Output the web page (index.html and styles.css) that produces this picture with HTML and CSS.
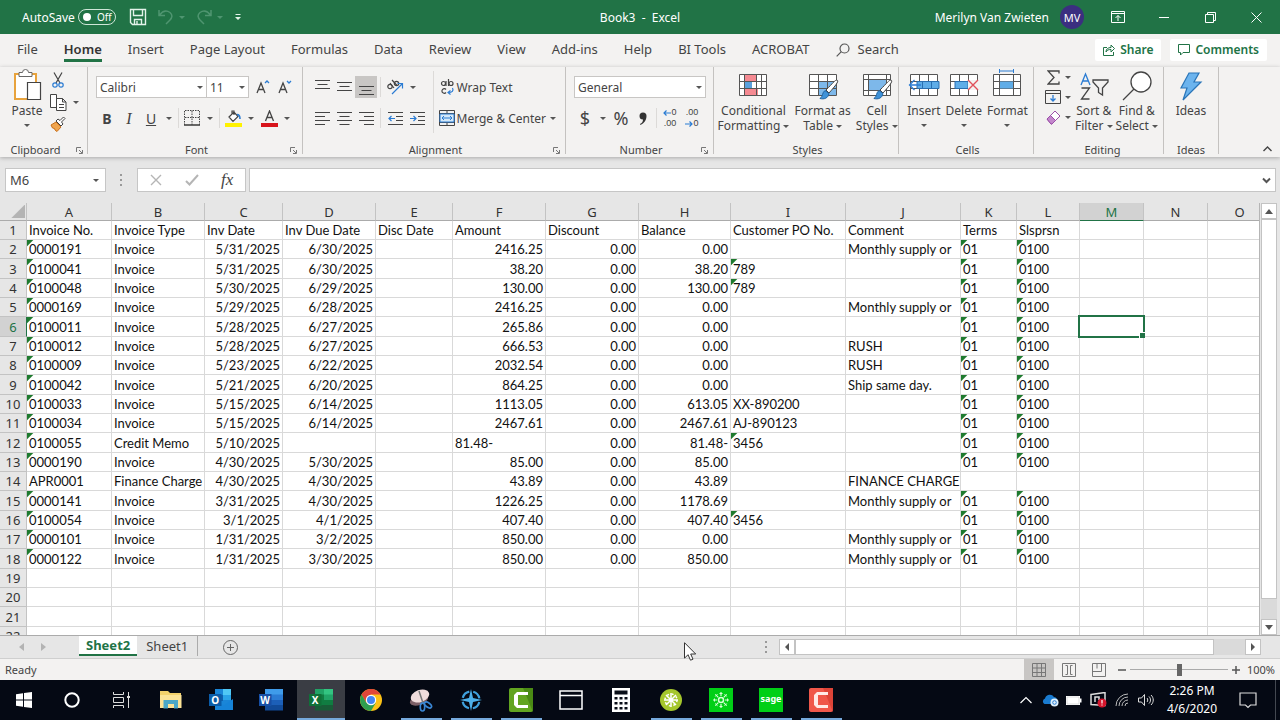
FILE: index.html
```html
<!DOCTYPE html>
<html lang="en">
<head>
<meta charset="utf-8">
<title>Book3 - Excel</title>
<link rel="stylesheet" href="styles.css">
</head>
<body>
<header class="titlebar">
  <div class="quick">
    <label class="autosave" for="autosave">AutoSave</label>
    <span class="toggle"><input type="checkbox" id="autosave"><span>Off</span></span>
    <button class="qbtn" aria-label="Save"><svg width="18" height="18" viewBox="0 0 18 18" fill="none" stroke="#e4f3ea" stroke-width="1.4"><path d="M1.5 1.5h15v15h-13l-2-2zM4.500 1.500v6h9v-6M5.500 16.500v-5h7v5M8 13v3"/></svg></button>
    <button class="qbtn dim" aria-label="Undo"><svg width="16" height="16" viewBox="0 0 16 16" fill="none" stroke="#4f9570" stroke-width="1.500"><path d="M1 1v5.500h6M1.500 6C5 1.500 9 1.500 12 3.500c3 2.500 2 5.500 0 7.500l-4 4"/></svg><i class="caret"></i></button>
    <button class="qbtn dim" aria-label="Redo"><svg width="16" height="16" viewBox="0 0 16 16" fill="none" stroke="#4f9570" stroke-width="1.500"><path d="M15 1v5.500H9M14.500 6C11 1.500 7 1.500 4 3.500c-3 2.500-2 5.500 0 7.500l4 4"/></svg><i class="caret"></i></button>
    <button class="qbtn" aria-label="Customize"><svg width="8" height="8" viewBox="0 0 8 8" fill="#e4f3ea"><path d="M1.500 1h5v1h-5zM1 4h6L4 7z"/></svg></button>
  </div>
  <h1 class="doc">Book3&nbsp; -&nbsp; Excel</h1>
  <div class="account">
    <span>Merilyn Van Zwieten</span>
    <span class="avatar">MV</span>
    <div class="winbtns">
      <button aria-label="Ribbon options"><svg width="14" height="12" viewBox="0 0 14 12" fill="none" stroke="#fff"><path d="M.5.5h13v11H.5zM.5 2.500h13M7 10V4.500M4.500 7L7 4.500 9.500 7"/></svg></button>
      <button aria-label="Minimize"><svg width="10" height="10" viewBox="0 0 10 10" stroke="#fff"><path d="M0 5.500h10"/></svg></button>
      <button aria-label="Restore"><svg width="11" height="11" viewBox="0 0 11 11" fill="none" stroke="#fff"><path d="M.5 2.500h8v8h-8zM2.500 2.500v-2h8v8h-2"/></svg></button>
      <button aria-label="Close"><svg width="11" height="11" viewBox="0 0 11 11" stroke="#fff"><path d="M.5.5l10 10M10.500.5l-10 10"/></svg></button>
    </div>
  </div>
</header>

<nav class="tabs">
  <button>File</button><button class="on">Home</button><button>Insert</button><button>Page Layout</button><button>Formulas</button><button>Data</button><button>Review</button><button>View</button><button>Add-ins</button><button>Help</button><button>BI Tools</button><button>ACROBAT</button>
  <button class="search"><svg width="14" height="14" viewBox="0 0 14 14" fill="none" stroke="#555" stroke-width="1.200"><circle cx="8.500" cy="5.500" r="4.500"/><path d="M5.300 8.700L.7 13.300"/></svg>Search</button>
  <div class="share">
    <button><svg width="12" height="13" viewBox="0 0 12 13" fill="none" stroke="#217346"><path d="M4 4.500H.5v8h10V9M3 9c0-3 2-4.500 5-4.500V2l3.500 3.500L8 9V6.500C5.500 6.500 4 7 3 9z"/></svg>Share</button>
    <button><svg width="12" height="12" viewBox="0 0 12 12" fill="none" stroke="#217346"><path d="M.5.5h11v8H5L2.500 11V8.500h-2z"/></svg>Comments</button>
  </div>
</nav>

<section class="ribbon">
  <div class="group g-clip">
    <div class="body">
      <button class="big paste"><svg width="30" height="32" viewBox="0 0 30 32" fill="none"><path d="M3 5h21v25H3z" fill="#fff" stroke="#e8a33d" stroke-width="2"/><path d="M7 3.500h3.500a3 3 0 0 1 6 0H20v4H7z" fill="#fff" stroke="#666"/><path d="M15.500 13.500h13v17h-13z" fill="#fff" stroke="#444" stroke-width="1.200"/></svg><span>Paste</span><i class="caret"></i></button>
      <div class="stack">
        <button class="ib" aria-label="Cut"><svg width="12" height="16" viewBox="0 0 12 16" fill="none"><path d="M2 .5l6 10.500M10 .5L4 11" stroke="#444" stroke-width="1.200"/><circle cx="3" cy="13" r="2.200" stroke="#2b7cd3" stroke-width="1.200"/><circle cx="9" cy="13" r="2.200" stroke="#2b7cd3" stroke-width="1.200"/></svg></button>
        <div class="pair"><button class="ib" aria-label="Copy"><svg width="17" height="17" viewBox="0 0 17 17" fill="#fff" stroke="#444"><path d="M.5.5h6v13h-6z"/><path d="M6.500 4.500h6l3.500 3.500v8.500H6.500zM12.500 4.500V8H16M9 10.500h5M9 13.500h5"/></svg></button><button class="dd" aria-label="Copy options"><i class="caret"></i></button></div>
        <button class="ib" aria-label="Format painter"><svg width="16" height="16" viewBox="0 0 16 16"><path d="M1 9l5-3 5 5-4 4.500L5 14l-.5-1.500L2.500 12z" fill="#f0a54e" stroke="#c9701a"/><path d="M6 5l2-2 2 1.500L13.500 1 15 2.500 11.500 6 13 8l-2 2z" fill="#fff" stroke="#444"/></svg></button>
      </div>
    </div>
    <div class="cap">Clipboard<button class="launch" aria-label="Clipboard settings"><svg width="7" height="7" viewBox="0 0 7 7" fill="none" stroke="#777"><path d="M.5 5V.5H5M3 3l3 3M6.500 3v3.500H3"/></svg></button></div>
  </div>

  <div class="group g-font">
    <div class="body rows">
      <div class="row">
        <span class="sel s-font"><select aria-label="Font"><option>Calibri</option></select></span>
        <span class="sel s-size"><select aria-label="Font size"><option>11</option></select></span>
        <div class="grow">
        <button class="ib" aria-label="Grow font"><svg width="14" height="16" viewBox="0 0 14 16" fill="none" stroke="#444" stroke-width="1.300"><path d="M1 14L5 4l4 10M2.500 10.500h5"/><path d="M9 4l2-2 2 2" stroke="#2b7cd3"/></svg></button>
        <button class="ib" aria-label="Shrink font"><svg width="14" height="16" viewBox="0 0 14 16" fill="none" stroke="#444" stroke-width="1.300"><path d="M1 14L5 4l4 10M2.500 10.500h5"/><path d="M9 2l2 2 2-2" stroke="#2b7cd3"/></svg></button>
        </div>
      </div>
      <div class="row">
        <button class="ib"><b>B</b></button><button class="ib ital">I</button><button class="ib"><u>U</u></button><button class="dd" aria-label="Underline options"><i class="caret"></i></button><i class="sep"></i>
        <button class="ib" aria-label="Borders"><svg width="16" height="16" viewBox="0 0 16 16" fill="none" stroke="#444"><path d="M.5 1v14M15.500 1v14M8 1v14M1 .5h14M1 7.500h14" stroke-dasharray="1.500 1"/><path d="M0 15h16" stroke-width="1.600"/></svg></button><button class="dd" aria-label="Border options"><i class="caret"></i></button><i class="sep"></i>
        <button class="ib" aria-label="Fill color"><svg width="17" height="17" viewBox="0 0 17 17" fill="none"><path d="M4 7l5-5 4 4.500-5 5zM7 4V1h2v4" stroke="#444" stroke-width="1.200" fill="#fff"/><path d="M12 4.500c2.500 0 3 2 3 4.500" stroke="#2b7cd3" stroke-width="1.600"/><path d="M0 13h17v4H0z" fill="#fff200"/></svg></button><button class="dd" aria-label="Fill options"><i class="caret"></i></button>
        <button class="ib" aria-label="Font color"><svg width="17" height="17" viewBox="0 0 17 17" fill="none"><path d="M4.500 11l4-10 4 10M6 7.500h5" stroke="#444" stroke-width="1.300"/><path d="M0 13h17v4H0z" fill="#d8141c"/></svg></button><button class="dd" aria-label="Font color options"><i class="caret"></i></button>
      </div>
    </div>
    <div class="cap">Font<button class="launch" aria-label="Font settings"><svg width="7" height="7" viewBox="0 0 7 7" fill="none" stroke="#777"><path d="M.5 5V.5H5M3 3l3 3M6.500 3v3.500H3"/></svg></button></div>
  </div>

  <div class="group g-align">
    <div class="body">
      <div class="rows">
        <div class="row">
          <button class="ib" aria-label="Top align"><svg width="15" height="16" viewBox="0 0 15 16" stroke="#444" stroke-width="1.200"><path d="M0 1.500h15M2.500 5.500h10M0 9.500h15"/></svg></button><button class="ib" aria-label="Middle align"><svg width="15" height="16" viewBox="0 0 15 16" stroke="#444" stroke-width="1.200"><path d="M0 3.500h15M2.500 7.500h10M0 11.500h15"/></svg></button><button class="ib pressed" aria-label="Bottom align"><svg width="15" height="16" viewBox="0 0 15 16" stroke="#444" stroke-width="1.200"><path d="M0 7.500h15M2.500 11.500h10M0 15.500h15"/></svg></button><i class="sep"></i>
          <button class="ib" aria-label="Orientation"><svg width="18" height="18" viewBox="0 0 18 18" fill="none" stroke="#444" stroke-width="1.200"><circle cx="4" cy="8.500" r="2.200"/><path d="M4 5l4 5M6 2l5 5.500"/><circle cx="10.500" cy="5.500" r="2.200"/><path d="M6 16L16 6M11.500 5.500H16.500V10.500" stroke="#2b7cd3"/></svg></button><button class="dd" aria-label="Orientation options"><i class="caret"></i></button>
        </div>
        <div class="row">
          <button class="ib" aria-label="Align left"><svg width="15" height="15" viewBox="0 0 15 15" stroke="#444" stroke-width="1.200"><path d="M0 1.500h15M0 5.500h10M0 9.500h15M0 13.500h10"/></svg></button><button class="ib" aria-label="Center"><svg width="15" height="15" viewBox="0 0 15 15" stroke="#444" stroke-width="1.200"><path d="M0 1.500h15M2.500 5.500h10M0 9.500h15M2.500 13.500h10"/></svg></button><button class="ib" aria-label="Align right"><svg width="15" height="15" viewBox="0 0 15 15" stroke="#444" stroke-width="1.200"><path d="M0 1.500h15M5 5.500h10M0 9.500h15M5 13.500h10"/></svg></button><i class="sep"></i>
          <button class="ib" aria-label="Decrease indent"><svg width="15" height="15" viewBox="0 0 15 15" fill="none" stroke="#444" stroke-width="1.200"><path d="M0 1.500h15M8 5.500h7M8 9.500h7M0 13.500h15"/><path d="M7 7.500H1M3.500 5L1 7.500 3.500 10" stroke="#2b7cd3"/></svg></button><button class="ib" aria-label="Increase indent"><svg width="15" height="15" viewBox="0 0 15 15" fill="none" stroke="#444" stroke-width="1.200"><path d="M0 1.500h15M8 5.500h7M8 9.500h7M0 13.500h15"/><path d="M0 7.500h6M3.500 5L6 7.500 3.500 10" stroke="#2b7cd3"/></svg></button>
        </div>
      </div>
      <i class="tall"></i>
      <div class="rows">
        <div class="row"><button class="wide"><svg width="16" height="18" viewBox="0 0 16 18" fill="none" stroke="#444" stroke-width="1.200"><circle cx="4.500" cy="5.500" r="2"/><path d="M7 3v5M9.500 1v7M7 14.500a2.300 2.300 0 1 1 0-3"/><circle cx="12" cy="5.500" r="2"/><path d="M13.500 10c1.500 3-.5 4.500-4 4.500M11.500 12.500l-2.500 2 2.500 2" stroke="#2b7cd3"/></svg>Wrap Text</button></div>
        <div class="row"><button class="wide"><svg width="16" height="16" viewBox="0 0 16 16" fill="none" stroke="#444"><path d="M.5.5h15v15H.5zM.5 3.500h15M.5 12.500h15M8 .5v3M8 12.500v3"/><path d="M1 4h14v8H1z" fill="#d4e8f8" stroke="#2b7cd3"/><path d="M3 8h10M5 6L3 8l2 2M11 6l2 2-2 2" stroke="#2b7cd3"/></svg>Merge &amp; Center</button><button class="dd" aria-label="Merge options"><i class="caret"></i></button></div>
      </div>
    </div>
    <div class="cap">Alignment<button class="launch" aria-label="Alignment settings"><svg width="7" height="7" viewBox="0 0 7 7" fill="none" stroke="#777"><path d="M.5 5V.5H5M3 3l3 3M6.500 3v3.500H3"/></svg></button></div>
  </div>

  <div class="group g-num">
    <div class="body rows">
      <div class="row"><span class="sel s-num"><select aria-label="Number format"><option>General</option></select></span></div>
      <div class="row">
        <button class="ib sym">$</button><button class="dd" aria-label="Currency options"><i class="caret"></i></button><button class="ib sym">%</button><button class="ib" aria-label="Comma style"><svg width="8" height="13" viewBox="0 0 8 13" fill="#333"><path d="M1 12c2-1 3-2.500 3-4.500A3.500 3.500 0 1 1 7.500 4C7.500 8 5 11.500 1.500 13z"/></svg></button><i class="sep"></i>
        <button class="ib dec" aria-label="Increase decimal"><span><svg width="8" height="8" viewBox="0 0 8 8" fill="none" stroke="#2b7cd3" stroke-width="1.200"><path d="M8 4H1M3.500 1.500L1 4l2.500 2.500"/></svg>0</span><span>.00</span></button>
        <button class="ib dec" aria-label="Decrease decimal"><span>.00</span><span><svg width="8" height="8" viewBox="0 0 8 8" fill="none" stroke="#2b7cd3" stroke-width="1.200"><path d="M0 4h7M4.500 1.500L7 4 4.500 6.500"/></svg>0</span></button>
      </div>
    </div>
    <div class="cap">Number<button class="launch" aria-label="Number settings"><svg width="7" height="7" viewBox="0 0 7 7" fill="none" stroke="#777"><path d="M.5 5V.5H5M3 3l3 3M6.500 3v3.500H3"/></svg></button></div>
  </div>

  <div class="group g-styles">
    <div class="body">
      <button class="big"><svg width="30" height="32" viewBox="0 0 30 32" fill="none"><path d="M1.500 5.500h27v21h-27z" fill="#fff"/><path d="M6 5h12v7H6zM6 19h14v7H6z" fill="#f58a92"/><path d="M6 12h8v7H6z" fill="#5ba0dc"/><path d="M1.500 5.500h27v21h-27zM1.500 12.500h27M1.500 19.500h27M6.500 5v21M18.500 5v21M23.500 5v21" stroke="#555"/></svg><span>Conditional<br>Formatting <i class="caret"></i></span></button>
      <button class="big"><svg width="32" height="32" viewBox="0 0 32 32" fill="none"><path d="M2.500 5.500h27v21h-27z" fill="#fff"/><path d="M11 12h18v14H11z" fill="#7db8ea"/><path d="M2.500 5.500h27v21h-27zM2.500 12.500h27M2.500 19.500h27M11.500 5v21M20.500 5v21" stroke="#555"/><path d="M30 11c2 1 0 4-8 13l-3-3c7-7 9-10 11-10z" fill="#fff" stroke="#444"/><path d="M18 21.500l4 3c-1 5-5 6-9 5 3-2 2-6 5-8z" fill="#3f92d8" stroke="#1f62a0"/></svg><span>Format as<br>Table <i class="caret"></i></span></button>
      <button class="big"><svg width="32" height="32" viewBox="0 0 32 32" fill="none"><path d="M2.500 5.500h27v21h-27z" fill="#fff"/><path d="M7 10h18v12H7z" fill="#7db8ea"/><path d="M2.500 5.500h27v21h-27zM2.500 10.500h27M2.500 21.500h27M7.500 5v21M25.500 5v21" stroke="#555"/><path d="M30 11c2 1 0 4-8 13l-3-3c7-7 9-10 11-10z" fill="#fff" stroke="#444"/><path d="M18 21.500l4 3c-1 5-5 6-9 5 3-2 2-6 5-8z" fill="#3f92d8" stroke="#1f62a0"/></svg><span>Cell<br>Styles <i class="caret"></i></span></button>
    </div>
    <div class="cap">Styles</div>
  </div>

  <div class="group g-cells">
    <div class="body">
      <button class="big"><svg width="32" height="32" viewBox="0 0 32 32" fill="none"><path d="M2.500 5.500h27v21h-27zM2.500 12.500h27M2.500 19.500h27M11.500 5v21M20.500 5v21" fill="#fff" stroke="#555"/><path d="M9 12.500h22v7H9z" fill="#5fade8" stroke="#2a6fb0"/><path d="M14.500 13v6M23.500 13v6" stroke="#2a6fb0"/><path d="M13 16H2M6.500 11L1.500 16l5 5" stroke="#2b7cd3" stroke-width="1.300"/></svg><span>Insert</span><i class="caret"></i></button>
      <button class="big"><svg width="32" height="32" viewBox="0 0 32 32" fill="none"><path d="M2.500 5.500h27v21h-27zM2.500 12.500h27M2.500 19.500h27M11.500 5v21M20.500 5v21" fill="#fff" stroke="#555"/><path d="M7 12.500h13v7H7z" fill="#5fade8" stroke="#2a6fb0"/><path d="M20 11h11v10H20z" fill="#f3f2f1"/><path d="M20 11l10 10M30 11L20 21" stroke="#e0505a" stroke-width="1.400"/></svg><span>Delete</span><i class="caret"></i></button>
      <button class="big"><svg width="32" height="32" viewBox="0 0 32 32" fill="none"><path d="M2.500 5.500h27v21h-27zM2.500 12.500h27M2.500 19.500h27M8.500 5v21M22.500 5v21" fill="#fff" stroke="#555"/><path d="M9 12.500h13v7H9z" fill="#5fade8"/><path d="M8.500 2h14M8.500 0v4M22.500 0v4" stroke="#2b7cd3"/></svg><span>Format</span><i class="caret"></i></button>
    </div>
    <div class="cap">Cells</div>
  </div>

  <div class="group g-edit">
    <div class="body">
      <div class="stack tight">
        <div class="pair"><button class="ib" aria-label="AutoSum"><svg width="13" height="15" viewBox="0 0 13 15" fill="none" stroke="#444" stroke-width="1.300"><path d="M12 3.500V1H1l6 6.500L1 14h11v-2.500"/></svg></button><button class="dd" aria-label="AutoSum options"><i class="caret"></i></button></div>
        <div class="pair"><button class="ib" aria-label="Fill"><svg width="16" height="14" viewBox="0 0 16 14" fill="none" stroke="#444"><path d="M.5.5h15v13H.5zM.5 3.500h15"/><path d="M8 5v6M5.500 8.500L8 11l2.500-2.500" stroke="#2b7cd3" stroke-width="1.300"/></svg></button><button class="dd" aria-label="Fill options"><i class="caret"></i></button></div>
        <div class="pair"><button class="ib" aria-label="Clear"><svg width="15" height="15" viewBox="0 0 15 15"><path d="M1 9l8-8 5 5-8 8H5z" fill="#fff" stroke="#9b4fa8"/><path d="M1 9l3.500-3.500 5 5L6 14H5z" fill="#c387cc" stroke="#9b4fa8"/></svg></button><button class="dd" aria-label="Clear options"><i class="caret"></i></button></div>
      </div>
      <button class="big"><svg width="30" height="32" viewBox="0 0 30 32" fill="none" stroke-width="1.300"><path d="M2 16L6.500 5 11 16M3.500 12h6" stroke="#2b7cd3"/><path d="M2.500 19h8l-8 11h8M14 11h15v2l-5.500 6v7l-4-2.500V19L14 13z" stroke="#444"/></svg><span>Sort &amp;<br>Filter <i class="caret"></i></span></button>
      <button class="big"><svg width="30" height="32" viewBox="0 0 30 32" fill="none" stroke="#444" stroke-width="1.300"><circle cx="19" cy="13" r="10" fill="#fff"/><path d="M12 20L1 31"/></svg><span>Find &amp;<br>Select <i class="caret"></i></span></button>
    </div>
    <div class="cap">Editing</div>
  </div>

  <div class="group g-ideas">
    <div class="body"><button class="big"><svg width="24" height="32" viewBox="0 0 24 32"><path d="M10 4h10l-5 9h7L4 31l4-12H2z" fill="#6cb4ee" stroke="#2a75b8" stroke-width="1.200"/></svg><span>Ideas</span></button></div>
    <div class="cap">Ideas</div>
  </div>
  <button class="collapse" aria-label="Collapse ribbon"><svg width="9" height="6" viewBox="0 0 9 6" fill="none" stroke="#444" stroke-width="1.400"><path d="M.5 5l4-4 4 4"/></svg></button>
</section>

<section class="fbar">
  <div class="namebox"><input aria-label="Name box" value="M6"><i class="caret"></i></div>
  <svg class="dots" width="3" height="14" viewBox="0 0 3 14" fill="#999"><path d="M0 1h2v2H0zM0 6h2v2H0zM0 11h2v2H0z"/></svg>
  <div class="fx">
    <button aria-label="Cancel"><svg width="12" height="12" viewBox="0 0 12 12" stroke="#b5b5b5" stroke-width="1.400"><path d="M1 1l10 10M11 1L1 11"/></svg></button>
    <button aria-label="Enter"><svg width="14" height="12" viewBox="0 0 14 12" fill="none" stroke="#b5b5b5" stroke-width="2"><path d="M1 7l3.500 3.500L13 1"/></svg></button>
    <button class="fn">fx</button>
  </div>
  <div class="formula"><input aria-label="Formula"><svg width="9" height="7" viewBox="0 0 9 7" fill="none" stroke="#555" stroke-width="2"><path d="M1 1.500l3.500 3.500L8 1.500"/></svg></div>
</section>

<main class="work">
  <div class="gridwrap">
    <table>
      <colgroup><col class="c0"><col class="c85"><col class="c93"><col class="c78"><col class="c93"><col class="c77"><col class="c93"><col class="c93"><col class="c92"><col class="c115"><col class="c115"><col class="c56"><col class="c63"><col class="c64"><col class="c64"><col class="c64"></colgroup>
      <thead><tr><th class="corner"></th><th>A</th><th>B</th><th>C</th><th>D</th><th>E</th><th>F</th><th>G</th><th>H</th><th>I</th><th>J</th><th>K</th><th>L</th><th class="cur">M</th><th>N</th><th>O</th></tr></thead>
      <tbody>
      <tr class="names"><th>1<td>Invoice No.<td>Invoice Type<td>Inv Date<td>Inv Due Date<td>Disc Date<td>Amount<td>Discount<td>Balance<td>Customer PO No.<td>Comment<td>Terms<td>Slsprsn<td><td><td></tr>
      <tr><th>2<td class="e">0000191<td>Invoice<td>5/31/2025<td>6/30/2025<td><td>2416.25<td>0.00<td>0.00<td><td>Monthly supply or<td class="e">01<td class="e">0100<td><td><td></tr>
      <tr><th>3<td class="e">0100041<td>Invoice<td>5/31/2025<td>6/30/2025<td><td>38.20<td>0.00<td>38.20<td class="e">789<td><td class="e">01<td class="e">0100<td><td><td></tr>
      <tr><th>4<td class="e">0100048<td>Invoice<td>5/30/2025<td>6/29/2025<td><td>130.00<td>0.00<td>130.00<td class="e">789<td><td class="e">01<td class="e">0100<td><td><td></tr>
      <tr><th>5<td class="e">0000169<td>Invoice<td>5/29/2025<td>6/28/2025<td><td>2416.25<td>0.00<td>0.00<td><td>Monthly supply or<td class="e">01<td class="e">0100<td><td><td></tr>
      <tr><th class="cur">6<td class="e">0100011<td>Invoice<td>5/28/2025<td>6/27/2025<td><td>265.86<td>0.00<td>0.00<td><td><td class="e">01<td class="e">0100<td class="active"><td><td></tr>
      <tr><th>7<td class="e">0100012<td>Invoice<td>5/28/2025<td>6/27/2025<td><td>666.53<td>0.00<td>0.00<td><td>RUSH<td class="e">01<td class="e">0100<td><td><td></tr>
      <tr><th>8<td class="e">0100009<td>Invoice<td>5/23/2025<td>6/22/2025<td><td>2032.54<td>0.00<td>0.00<td><td>RUSH<td class="e">01<td class="e">0100<td><td><td></tr>
      <tr><th>9<td class="e">0100042<td>Invoice<td>5/21/2025<td>6/20/2025<td><td>864.25<td>0.00<td>0.00<td><td>Ship same day.<td class="e">01<td class="e">0100<td><td><td></tr>
      <tr><th>10<td class="e">0100033<td>Invoice<td>5/15/2025<td>6/14/2025<td><td>1113.05<td>0.00<td>613.05<td>XX-890200<td><td class="e">01<td class="e">0100<td><td><td></tr>
      <tr><th>11<td class="e">0100034<td>Invoice<td>5/15/2025<td>6/14/2025<td><td>2467.61<td>0.00<td>2467.61<td>AJ-890123<td><td class="e">01<td class="e">0100<td><td><td></tr>
      <tr><th>12<td class="e">0100055<td>Credit Memo<td>5/10/2025<td><td><td class="txt">81.48-<td>0.00<td>81.48-<td class="e">3456<td><td class="e">01<td class="e">0100<td><td><td></tr>
      <tr><th>13<td class="e">0000190<td>Invoice<td>4/30/2025<td>5/30/2025<td><td>85.00<td>0.00<td>85.00<td><td><td class="e">01<td class="e">0100<td><td><td></tr>
      <tr><th>14<td>APR0001<td>Finance Charge<td>4/30/2025<td>4/30/2025<td><td>43.89<td>0.00<td>43.89<td><td>FINANCE CHARGE<td><td><td><td><td></tr>
      <tr><th>15<td class="e">0000141<td>Invoice<td>3/31/2025<td>4/30/2025<td><td>1226.25<td>0.00<td>1178.69<td><td>Monthly supply or<td class="e">01<td class="e">0100<td><td><td></tr>
      <tr><th>16<td class="e">0100054<td>Invoice<td>3/1/2025<td>4/1/2025<td><td>407.40<td>0.00<td>407.40<td class="e">3456<td><td class="e">01<td class="e">0100<td><td><td></tr>
      <tr><th>17<td class="e">0000101<td>Invoice<td>1/31/2025<td>3/2/2025<td><td>850.00<td>0.00<td>0.00<td><td>Monthly supply or<td class="e">01<td class="e">0100<td><td><td></tr>
      <tr><th>18<td class="e">0000122<td>Invoice<td>1/31/2025<td>3/30/2025<td><td>850.00<td>0.00<td>850.00<td><td>Monthly supply or<td class="e">01<td class="e">0100<td><td><td></tr>
      <tr><th>19<td><td><td><td><td><td><td><td><td><td><td><td><td><td><td></tr>
      <tr><th>20<td><td><td><td><td><td><td><td><td><td><td><td><td><td><td></tr>
      <tr><th>21<td><td><td><td><td><td><td><td><td><td><td><td><td><td><td></tr>
      <tr><th>22<td><td><td><td><td><td><td><td><td><td><td><td><td><td><td></tr>
      </tbody>
    </table>
  </div>
  <div class="vscroll">
    <button aria-label="Scroll up"><svg width="8" height="5" viewBox="0 0 8 5" fill="#555"><path d="M0 5h8L4 0z"/></svg></button>
    <div class="vthumb"></div><div class="vtrack"></div>
    <button aria-label="Scroll down"><svg width="8" height="5" viewBox="0 0 8 5" fill="#555"><path d="M0 0h8L4 5z"/></svg></button>
  </div>
</main>

<section class="sheets">
  <div class="snav"><button aria-label="Previous sheet"><svg width="5" height="8" viewBox="0 0 5 8" fill="#b3b3b3"><path d="M5 0v8L0 4z"/></svg></button><button aria-label="Next sheet"><svg width="5" height="8" viewBox="0 0 5 8" fill="#b3b3b3"><path d="M0 0v8l5-4z"/></svg></button></div>
  <button class="tab on">Sheet2</button><button class="tab">Sheet1</button>
  <button class="add" aria-label="New sheet"><svg width="15" height="15" viewBox="0 0 15 15" fill="none" stroke="#666"><circle cx="7.500" cy="7.500" r="7"/><path d="M7.500 4v7M4 7.500h7"/></svg></button>
  <div class="hscroll">
    <svg class="dots" width="3" height="14" viewBox="0 0 3 14" fill="#999"><path d="M0 1h2v2H0zM0 6h2v2H0zM0 11h2v2H0z"/></svg>
    <button aria-label="Scroll left"><svg width="4" height="8" viewBox="0 0 4 8" fill="#555"><path d="M4 0v8L0 4z"/></svg></button>
    <div class="hthumb"></div><div class="htrack"></div>
    <button aria-label="Scroll right"><svg width="4" height="8" viewBox="0 0 4 8" fill="#555"><path d="M0 0v8l4-4z"/></svg></button>
  </div>
</section>

<footer class="status">
  <span>Ready</span>
  <div class="views">
    <button class="pressed" aria-label="Normal"><svg width="14" height="14" viewBox="0 0 14 14" fill="none" stroke="#777"><path d="M.5.5h13v13H.5zM.5 5h13M.5 9.500h13M5 .5v13M9.500.5v13"/></svg></button>
    <button aria-label="Page layout"><svg width="14" height="14" viewBox="0 0 14 14" fill="none" stroke="#777"><path d="M.5.5h13v13H.5zM3.500 2.500h2v9h-2M10.500 2.500h-2v9h2M5.500 5v4M8.500 5v4"/></svg></button>
    <button aria-label="Page break preview"><svg width="14" height="14" viewBox="0 0 14 14" fill="none" stroke="#777"><path d="M.5.5h13v13H.5zM.5 8.500h9v-8M5 .5v5"/></svg></button>
  </div>
  <button class="zm" aria-label="Zoom out"><svg width="8" height="8" viewBox="0 0 8 8" stroke="#555" stroke-width="1.500"><path d="M0 4h8"/></svg></button>
  <input type="range" aria-label="Zoom" min="0" max="100" value="50">
  <button class="zm" aria-label="Zoom in"><svg width="8" height="8" viewBox="0 0 8 8" stroke="#555" stroke-width="1.500"><path d="M0 4h8M4 0v8"/></svg></button>
  <span class="pct">100%</span>
</footer>

<footer class="taskbar">
  <button class="sys" aria-label="Start"><svg width="16" height="16" viewBox="0 0 16 16" fill="#fff"><path d="M0 2.200l7-1V7.500H0zM8 1l8-1v7.500H8zM0 8.500h7v6.300l-7-1zM8 8.500h8V16l-8-1z"/></svg></button>
  <button class="sys" aria-label="Search"><svg width="16" height="16" viewBox="0 0 16 16" fill="none" stroke="#fff" stroke-width="2"><circle cx="8" cy="8" r="6.700"/></svg></button>
  <button class="sys" aria-label="Task view"><svg width="17" height="16" viewBox="0 0 17 16" fill="none" stroke="#ddd"><path d="M.5 0v2.500h10V0M.5 5.500h10v5H.5zM.5 16v-2.500h10V16M15.500 0v16"/><path d="M14 5h3" stroke-width="2"/></svg></button>
  <button class="app" aria-label="File Explorer"><svg width="22" height="20" viewBox="0 0 22 20"><path d="M0 1h8l2 2h11v14H0z" fill="#f2d16b"/><path d="M0 5h21.500v13H0z" fill="#fbe396"/><path d="M3.500 10h14.500v8.500h-4V14h-6v4.500H3.500z" fill="#4aa8c8"/></svg></button>
  <button class="app" aria-label="Outlook"><svg width="24" height="22" viewBox="0 0 24 22"><path d="M6 0h16v16H6z" fill="#1a86d8"/><path d="M14 0h8v6h-8z" fill="#50c8f5"/><path d="M6 6h8v6H6z" fill="#0f62b0"/><path d="M14 6h8v5h-8z" fill="#2aa4e8"/><path d="M6 13l9 3 9-6v11H6z" fill="#1683d8"/><path d="M0 5h12.500v12H0z" fill="#0b5ca8"/><text x="6.200" y="14.500" class="glyph">O</text></svg></button>
  <button class="app" aria-label="Word"><svg width="24" height="22" viewBox="0 0 24 22"><path d="M6 0h18v6H6z" fill="#3f9bea"/><path d="M6 5.500h18V11H6z" fill="#2b7bd4"/><path d="M6 11h18v5.500H6z" fill="#1c5fb8"/><path d="M6 16h18v5.500H6z" fill="#114a98"/><path d="M0 5h12.500v12H0z" fill="#174fa5"/><text x="6.200" y="14.500" class="glyph">W</text></svg></button>
  <button class="app run front" aria-label="Excel"><svg width="24" height="22" viewBox="0 0 24 22"><path d="M6 0h9v6H6z" fill="#21a366"/><path d="M15 0h9v6h-9z" fill="#33c481"/><path d="M6 5.500h9V16H6z" fill="#107c41"/><path d="M15 5.500h9V11h-9z" fill="#21a366"/><path d="M15 11h9v5.500h-9z" fill="#107c41"/><path d="M6 16h18v5.500H6z" fill="#185c37"/><path d="M0 5h12.500v12H0z" fill="#0f7038"/><text x="6.200" y="14.500" class="glyph">X</text></svg></button>
  <button class="app" aria-label="Chrome"><svg width="22" height="22" viewBox="0 0 22 22"><circle cx="11" cy="11" r="11" fill="#fbc116"/><path d="M1.500 5.500A11 11 0 0 1 20.500 5.500H11l-4.800 8.200z" fill="#e0463a"/><path d="M1.500 5.500A11 11 0 0 0 11 22l4.800-8.200H6.300z" fill="#2e9e4f"/><circle cx="11" cy="11" r="5.200" fill="#fff"/><circle cx="11" cy="11" r="4" fill="#4285f4"/></svg></button>
  <button class="app run" aria-label="Snipping Tool"><svg width="24" height="23" viewBox="0 0 24 23" fill="none"><ellipse cx="10" cy="11" rx="9.500" ry="5" fill="#7d5f66" transform="rotate(-20 10 11)"/><ellipse cx="11" cy="7" rx="9.500" ry="6" fill="#f0dcdc" transform="rotate(-20 11 7)"/><path d="M10 2l4 12M12 15l4-2" stroke="#777" stroke-width="1.500"/><ellipse cx="13.500" cy="18" rx="2.200" ry="4" stroke="#3a86d4" stroke-width="1.700"/><ellipse cx="19" cy="16" rx="2.200" ry="4" stroke="#3a86d4" stroke-width="1.700" transform="rotate(-55 19 16)"/></svg></button>
  <button class="app run" aria-label="Compass"><svg width="22" height="22" viewBox="0 0 22 22" fill="none"><circle cx="11" cy="11" r="8.500" stroke="#3fa0dc" stroke-width="2.200" stroke-dasharray="9.350 4" stroke-dashoffset="-2"/><path d="M11 0l2 9 9 2-9 2-2 9-2-9-9-2 9-2z" fill="#4db0ea"/></svg></button>
  <button class="app run" aria-label="Camtasia"><svg width="24" height="24" viewBox="0 0 24 24"><rect width="24" height="24" rx="2" fill="#62a420"/><path d="M14 0h10v24z" fill="#4a8a14"/><path d="M19 4H8L5 7v10l3 3h11v-3H9V7h10z" fill="#fff"/></svg></button>
  <button class="app" aria-label="Window"><svg width="24" height="20" viewBox="0 0 24 20" fill="none" stroke="#fff" stroke-width="1.500"><path d="M1 1h22v18H1zM1 5.500h22"/></svg></button>
  <button class="app" aria-label="Calculator"><svg width="18" height="24" viewBox="0 0 18 24"><path d="M0 0h18v24H0z" fill="#fff"/><path d="M2.500 2.500h13v4h-13zM2.500 9h3v2.500h-3zM7.500 9h3v2.500h-3zM12.500 9h3v2.500h-3zM2.500 14h3v2.500h-3zM7.500 14h3v2.500h-3zM12.500 14h3v2.500h-3zM2.500 19h3v2.500h-3zM7.500 19h3v2.500h-3zM12.500 19h3v2.500h-3z" fill="#0a0e18"/></svg></button>
  <button class="app run" aria-label="Sage 100"><svg width="22" height="22" viewBox="0 0 22 22"><circle cx="11" cy="11" r="11" fill="#a5c62c"/><g fill="none" stroke="#fff" stroke-width="1.500"><path d="M11 4v14M4 11h14M6 6l10 10M16 6L6 16"/><circle cx="11" cy="11" r="6" stroke-dasharray="2 2.700"/></g></svg></button>
  <button class="app run" aria-label="Sage CRM"><svg width="24" height="24" viewBox="0 0 24 24" fill="none" stroke="#d6ffd6"><path d="M0 0h24v24H0z" fill="#00cf16" stroke="none"/><circle cx="12" cy="12" r="2.500" stroke-width="1.500"/><path d="M12 4v4M12 16v4M4 12h4M16 12h4M6.300 6.300l3 3M14.700 14.700l3 3M17.700 6.300l-3 3M9.300 14.700l-3 3" stroke-width="1.200"/><path d="M10.500 5.500h3M10.500 18.500h3M5.500 10.500v3M18.500 10.500v3M6.300 8.500l2.200-2.200M15.500 6.300l2.200 2.200M6.300 15.500l2.200 2.200M17.700 15.500l-2.200 2.200"/></svg></button>
  <button class="app run" aria-label="Sage"><span class="sage">sage</span></button>
  <button class="app run" aria-label="Camtasia Recorder"><svg width="24" height="24" viewBox="0 0 24 24"><rect width="24" height="24" rx="2" fill="#f0574a"/><path d="M14 0h10v24z" fill="#dd4438"/><path d="M19 4H8L5 7v10l3 3h11v-3H9V7h10z" fill="#ffe9e6"/></svg></button>
  <div class="tray">
    <button aria-label="Hidden icons"><svg width="12" height="8" viewBox="0 0 12 8" fill="none" stroke="#fff" stroke-width="1.200"><path d="M.5 7L6 1.500 11.500 7"/></svg></button>
    <button aria-label="OneDrive"><svg width="17" height="14" viewBox="0 0 17 14"><path d="M2.500 11A3 3 0 0 1 3 5.500a5 5 0 0 1 9-1.500 3.500 3.500 0 0 1 3 5L12 11z" fill="#1a7bd0"/><circle cx="12.500" cy="9.500" r="4" fill="#dff0fb"/><circle cx="12.500" cy="9.500" r="1.800" fill="none" stroke="#2b7cd3"/></svg></button>
    <button aria-label="Battery"><svg width="16" height="9" viewBox="0 0 16 9"><path d="M0 0h14v2.500h1.500v4H14V9H0z" fill="#fff"/><path d="M1 1h12v7H1z" fill="#fff" stroke="#bbb" stroke-width=".5"/></svg></button>
    <button aria-label="Security alert"><svg width="17" height="16" viewBox="0 0 17 16" fill="none"><path d="M1 2.500l14-2v13l-14-1z" stroke="#ddd" stroke-width="1.500"/><path d="M5 10V5h4v3" stroke="#ddd" stroke-width="1.500"/><circle cx="12" cy="11" r="4.500" fill="#d5152c"/><path d="M12 8v3.500M12 12.500v1" stroke="#fff" stroke-width="1.200"/></svg></button>
    <button aria-label="Network"><svg width="14" height="14" viewBox="0 0 14 14" fill="none" stroke="#bbb"><path d="M1 13A12 12 0 0 1 13 1M4 13a9 9 0 0 1 9-9M7 13a6 6 0 0 1 6-6M10 13a3 3 0 0 1 3-3"/></svg></button>
    <button aria-label="Volume"><svg width="16" height="12" viewBox="0 0 16 12" fill="none" stroke="#ddd"><path d="M.5 4h3l3-3.500v11L3.500 8h-3zM9 4c1 1 1 3 0 4M11 2.500c2 2 2 5 0 7M13 1c3 3 3 7 0 10"/></svg></button>
    <div class="clock"><span>2:26 PM</span><span>4/6/2020</span></div>
    <button class="action" aria-label="Notifications"><svg width="18" height="17" viewBox="0 0 18 17" fill="none" stroke="#ddd" stroke-width="1.200"><path d="M1 1h16v12h-5.500L9 15.500 6.500 13H1z"/></svg></button>
    <i class="edge"></i>
  </div>
</footer>
<svg class="pointer" width="13" height="19" viewBox="0 0 13 19"><path d="M.5.7v15.500l3.500-3.500 2.500 5.500 2.500-1L6.700 12h5z" fill="#fff" stroke="#333"/></svg>
</body>
</html>
```
FILE: styles.css
```css
* { box-sizing: border-box; }
body {
  margin: 0; height: 100vh; display: flex; flex-direction: column; overflow: hidden;
  position: relative; background: #e6e6e6; color: #444;
  font: 12px/15px "Noto Sans", "Open Sans", sans-serif;
}
button { border: 0; background: none; padding: 0; margin: 0; font: inherit; color: inherit; display: flex; align-items: center; justify-content: center; }
svg { display: block; flex: none; }
input, select { font: inherit; color: inherit; border: 0; background: none; padding: 0; margin: 0; outline: 0; }
.caret { display: inline-block; flex: none; width: 0; height: 0; border: 3px solid transparent; border-top-color: #555; border-bottom: 0; vertical-align: 2px; }

/* Title bar */
.titlebar { display: grid; grid-template-columns: 1fr auto 1fr; align-items: center; height: 34px; flex: none; background: #217346; color: #fff; }
.quick { display: flex; align-items: center; padding-left: 22px; }
.toggle { display: flex; align-items: center; gap: 6px; width: 38px; height: 16px; margin: 0 13px 0 3px; padding: 0 4px; border: 1px solid #cfe6d8; border-radius: 8px; font-size: 10px; }
.toggle input { appearance: none; flex: none; width: 8px; height: 8px; border-radius: 4px; background: #fff; }
.qbtn { gap: 5px; margin-right: 11px; }
.dim .caret { border-top-color: #4f9570; }
.doc { margin: 0; font-size: 12px; font-weight: 400; }
.account { display: flex; align-items: center; justify-content: flex-end; padding-right: 1px; }
.avatar { display: flex; align-items: center; justify-content: center; width: 24px; height: 24px; margin: 0 11px; border-radius: 50%; background: #3b2f80; font-size: 11px; }
.winbtns { display: flex; }
.winbtns button { width: 46px; height: 34px; }

/* Ribbon tabs */
.tabs { display: flex; align-items: center; gap: 26px; height: 33px; flex: none; padding: 0 13px 2px 17px; background: #f3f2f1; font-size: 13px; }
.tabs > button { height: 24px; padding: 2px 0; border-top: 3px solid transparent; border-bottom: 3px solid transparent; white-space: nowrap; }
.tabs > .on { border-bottom-color: #217346; font-weight: 600; color: #333; }
.tabs .search { gap: 8px; }
.share { display: flex; gap: 9px; margin-left: auto; }
.share button { gap: 5px; height: 22px; padding: 0 8px; border-radius: 2px; background: #fff; color: #217346; font-size: 12px; font-weight: 600; }

/* Ribbon */
.ribbon { display: flex; flex: none; height: 90px; background: #f3f2f1; box-shadow: 0 1px 4px #aaa; position: relative; }
.group { display: flex; flex-direction: column; height: 87px; border-right: 1px solid #c4c2c0; padding: 0 5px 0 8px; flex: none; }
.g-clip { width: 88px; padding: 0; }
.g-font { width: 215px; }
.g-align { width: 263px; }
.g-num { width: 148px; }
.g-styles { width: 185px; }
.g-cells { width: 135px; }
.g-edit { width: 130px; padding-right: 0; }
.g-ideas { width: 55px; padding: 0; }
.body { display: flex; flex: 1; }
.g-styles .body, .g-cells .body { gap: 5px; justify-content: center; }
.g-edit .body { gap: 3px; }
.g-ideas .body { justify-content: center; }
.cap { position: relative; height: 11px; line-height: 13px; font-size: 11px; text-align: center; }
.launch { position: absolute; right: 0; top: 4px; }
.g-clip .cap { padding-right: 16px; }
.g-clip .launch { right: 4px; }
.rows { display: flex; flex-direction: column; gap: 9px; padding-top: 9px; }
.row { display: flex; align-items: center; height: 22px; }
.grow { display: flex; margin-left: 3px; }
.ib { width: 22px; height: 22px; font-size: 14px; flex: none; }
.ital { font-family: "Liberation Serif", serif; font-style: italic; font-size: 16px; }
.sym { font-size: 18px; }
.dd { width: 14px; height: 22px; }
.pressed { background: #c8c6c4; }
.sep { width: 1px; height: 20px; margin: 0 2px; background: #dcdad8; }
.g-align .sep { margin: 0 3px; }
.tall { width: 1px; height: 62px; margin: 4px 5px 0; background: #dcdad8; }
.wide { gap: 2px; white-space: nowrap; }
.dec { flex-direction: column; font: 9px/11px "Liberation Sans", sans-serif; }
.dec span { display: flex; align-items: center; }
.sel { position: relative; height: 22px; border: 1px solid #c8c6c4; background: #fff; display: flex; }
.sel::after { content: ""; position: absolute; right: 3px; top: 9px; border: 3px solid transparent; border-top-color: #555; border-bottom: 0; }
.sel select { appearance: none; width: 100%; padding-left: 3px; }
.s-font { width: 111px; }
.s-size { width: 43px; margin-left: -1px; }
.s-num { width: 132px; }
.stack { display: flex; flex-direction: column; padding-top: 2px; }
.tight { padding-top: 0; }
.tight .ib, .tight .dd { height: 20px; }
.tight .dd { width: 8px; }
.pair { display: flex; }
.stack > .ib { align-self: flex-start; }
.big { flex-direction: column; justify-content: flex-start; padding-top: 2px; white-space: nowrap; }
.big svg { margin-bottom: 2px; }
.big > .caret { margin-top: 6px; }
.paste { width: 47px; padding-left: 7px; }
.collapse { margin: auto 8px 5px auto; }

/* Formula bar */
.fbar { display: flex; align-items: center; flex: none; height: 46px; padding: 0 4px 0 5px; }
.namebox, .fx, .formula { display: flex; align-items: center; height: 24px; background: #fff; border: 1px solid #c6c6c6; }
.namebox { width: 101px; padding: 0 6px 0 4px; font-size: 13px; }
.namebox input { flex: 1; min-width: 0; }
.dots { margin: 0 14px; }
.fx { width: 109px; margin-right: 3px; }
.fx button { width: 36px; }
.fn { font: italic 17px/20px "Liberation Serif", serif; }
.formula { flex: 1; padding-right: 4px; }
.formula input { flex: 1; }

/* Worksheet */
.work { display: flex; flex: 1 1 0; min-height: 0; }
.gridwrap { flex: 1; overflow: hidden; background: #fff; border-right: 1px solid #b5b5b5; }
table { width: 1272px; table-layout: fixed; border-collapse: separate; border-spacing: 0; color: #111; font: 13px/18px Lato, sans-serif; }
.c0 { width: 27px; } .c56 { width: 56px; } .c63 { width: 63px; } .c64 { width: 64px; } .c77 { width: 77px; } .c78 { width: 78px; }
.c85 { width: 85px; } .c92 { width: 92px; } .c93 { width: 93px; } .c115 { width: 115px; }
th, td { height: 19px; padding: 0 2px; overflow: hidden; white-space: nowrap; border-right: 1px solid #d9d9d9; border-bottom: 1px solid #d9d9d9; }
th { padding: 0; background: #e6e6e6; color: #333; font-weight: 400; text-align: center; border-color: #c3c3c3; font-family: "Noto Sans", sans-serif; font-size: 13px; }
thead th { height: 18px; line-height: 16px; border-bottom-color: #ababab; }
tbody tr:nth-child(3n) > * { height: 20px; }
td:nth-child(4), td:nth-child(5), td:nth-child(7), td:nth-child(8), td:nth-child(9) { text-align: right; }
.names td:nth-child(n), td.txt:nth-child(n) { text-align: left; }
.e { background: linear-gradient(135deg, #1e7a2e 4px, transparent 5px) no-repeat; }
.corner { background: linear-gradient(135deg, transparent 9px, #b4b4b4 10px) no-repeat 11px 2px / 14px 13px #e6e6e6; }
th.cur { background: #d2d2d2; color: #217346; border-right-color: #217346; }
thead th.cur { border-right-color: #c3c3c3; border-bottom: 1px solid #217346; }
.active { position: relative; overflow: visible; }
.active::before { content: ""; position: absolute; inset: -2px; border: 2px solid #217346; }
.active::after { content: ""; position: absolute; right: -2px; bottom: -2px; width: 5px; height: 5px; background: #217346; border: solid #fff; border-width: 1px 0 0 1px; }
.vscroll { width: 20px; display: flex; flex-direction: column; padding: 0 3px 0 1px; }
.vscroll button, .hscroll button { width: 16px; height: 16px; flex: none; background: #fff; border: 1px solid #c3c3c3; }
.vthumb { flex: 382; background: #fff; border: 1px solid #c3c3c3; }
.vtrack { flex: 20; background: #dadada; }

/* Sheet tabs */
.sheets { display: flex; flex: none; height: 24px; border-top: 1px solid #ababab; border-bottom: 1px solid #cfcfcf; }
.snav { display: flex; gap: 17px; width: 79px; padding-left: 19px; }
.tab { height: 20px; padding: 0 9px; font-size: 13px; }
.tab.on { background: #fff; color: #217346; font-weight: 700; border-bottom: 2px solid #217346; padding: 0 7px; }
.tab + .tab { border-right: 1px solid #ababab; }
.add { margin-left: 25px; }
.hscroll { display: flex; align-items: center; margin-left: auto; width: 515px; padding-right: 19px; }
.hscroll .dots { margin: 0 11px 0 0; }
.hthumb { flex: 418; height: 16px; background: #fff; border: 1px solid #c3c3c3; }
.htrack { flex: 31; height: 16px; background: #dadada; }

/* Status bar */
.status { display: flex; align-items: center; flex: none; height: 21px; padding: 0 5px; background: #f3f2f1; font-size: 11px; }
.views { display: flex; margin-left: auto; }
.views button { width: 30px; height: 21px; }
.zm { width: 16px; }
.status input { appearance: none; width: 98px; height: 15px; background: linear-gradient(#aaa, #aaa) no-repeat 0 7px / 100% 1px; }
.status input::-webkit-slider-thumb { appearance: none; width: 5px; height: 12px; background: #666; }
.pct { width: 31px; text-align: right; }

/* Taskbar */
.taskbar { display: flex; flex: none; height: 40px; background: #050914; color: #fff; }
.sys { width: 48px; }
.sys + .sys + .sys { width: 50px; }
.app { width: 50px; position: relative; }
.run::after { content: ""; position: absolute; left: 5px; right: 4px; bottom: 0; height: 2px; background: #76a9dc; }
.front { background: linear-gradient(#3a3d44, #3a3d44) no-repeat 1px 0 / 48px 100%; }
.front::after { left: 1px; right: 1px; }
.glyph { fill: #fff; font: 700 10px "Noto Sans", sans-serif; text-anchor: middle; }
.sage { width: 24px; height: 24px; background: #00cf16; font-size: 9px; line-height: 22px; font-weight: 700; text-align: center; }
.tray { display: flex; align-items: center; margin-left: auto; }
.tray button { width: 24px; height: 40px; }
.clock { display: flex; flex-direction: column; width: 68px; text-align: center; line-height: 18px; }
.tray .action { width: 44px; }
.edge { width: 1px; height: 40px; margin: 0 4px 0 5px; background: #444851; }

.pointer { position: absolute; left: 684px; top: 642px; }
```
